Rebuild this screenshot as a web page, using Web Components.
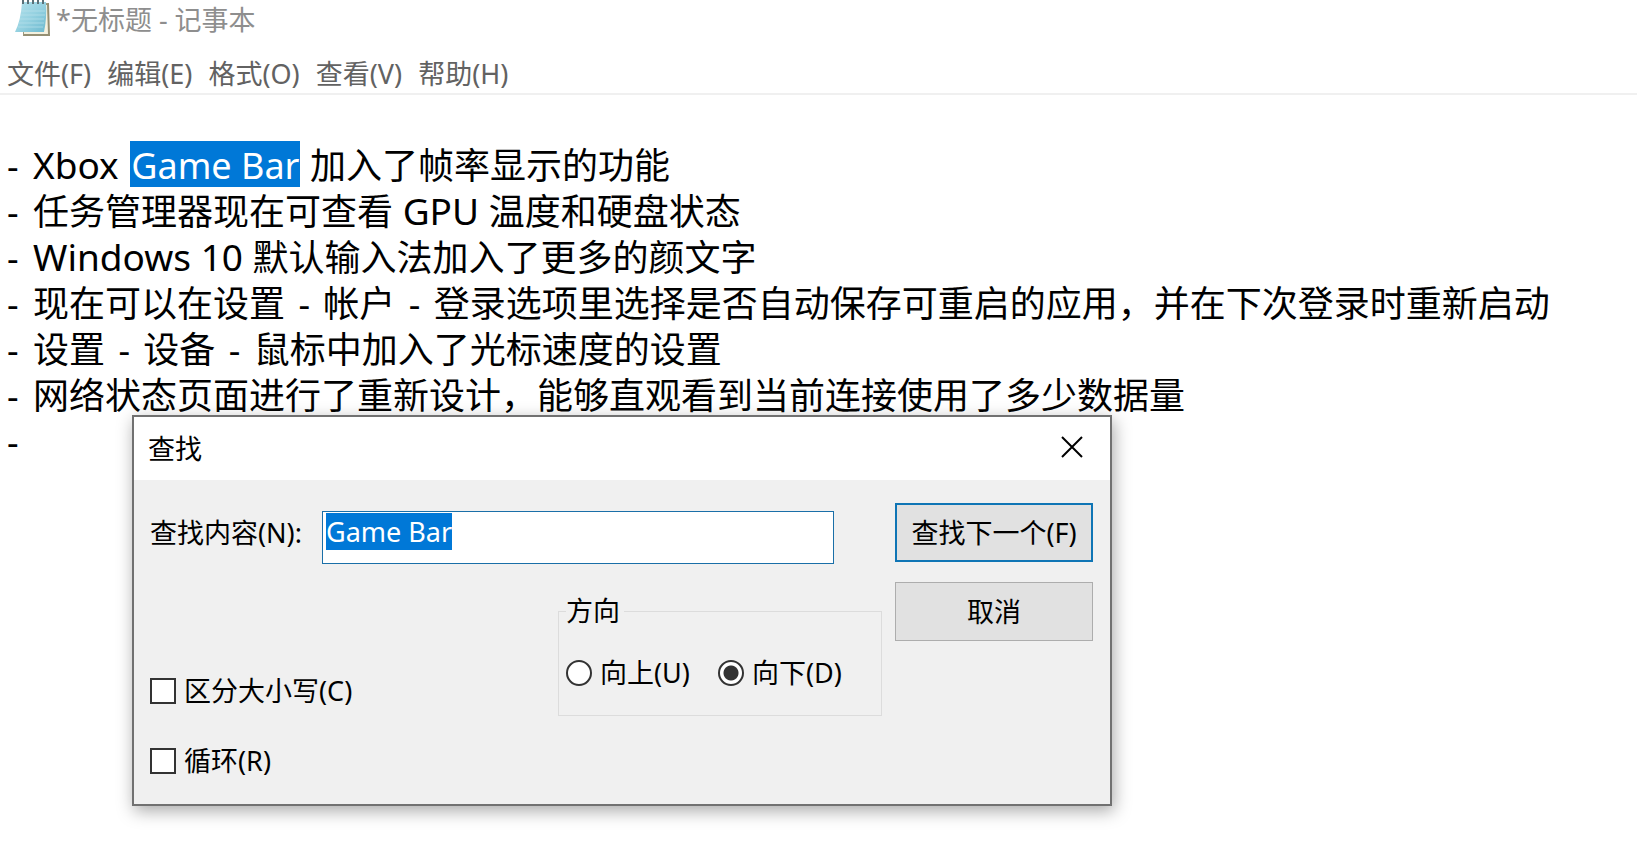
<!DOCTYPE html>
<html lang="zh-CN">
<head>
<meta charset="utf-8">
<title>*无标题 - 记事本</title>
<style>
body { margin: 0; background: #fff; color: #000; font: 27px/36px "Noto Sans", "Noto Sans CJK SC", sans-serif; }
</style>
</head>
<body>
<notepad-window>
  <title-bar slot="title">*无标题 - 记事本</title-bar>
  <menu-bar slot="menu">
    <menu-item>文件(F)</menu-item>
    <menu-item>编辑(E)</menu-item>
    <menu-item>格式(O)</menu-item>
    <menu-item>查看(V)</menu-item>
    <menu-item>帮助(H)</menu-item>
  </menu-bar>
  <note-line><latin-run>Xbox <selected-text>Game Bar</selected-text> </latin-run>加入了帧率显示的功能</note-line>
  <note-line>任务管理器现在可查看<latin-run> GPU </latin-run>温度和硬盘状态</note-line>
  <note-line><latin-run>Windows 10 </latin-run>默认输入法加入了更多的颜文字</note-line>
  <note-line>现在可以在设置<dash-mark></dash-mark>帐户<dash-mark></dash-mark>登录选项里选择是否自动保存可重启的应用，并在下次登录时重新启动</note-line>
  <note-line>设置<dash-mark></dash-mark>设备<dash-mark></dash-mark>鼠标中加入了光标速度的设置</note-line>
  <note-line>网络状态页面进行了重新设计，能够直观看到当前连接使用了多少数据量</note-line>
  <note-line></note-line>
  <find-dialog slot="dialog"></find-dialog>
</notepad-window>

<script>
function define(name, html, setup) {
  const template = document.createElement('template');
  template.innerHTML = html;
  customElements.define(name, class extends HTMLElement {
    constructor() {
      super();
      this.attachShadow({ mode: 'open' }).append(template.content.cloneNode(true));
    }
    connectedCallback() { if (setup) setup(this.shadowRoot, this); }
  });
}

define('dash-mark', `
  <style>:host { display: inline; } span { margin: 0 4px; }</style>
  <span> - </span>`);

define('latin-run', `
  <style>:host { display: inline; font-size: 37px; line-height: 42px; }</style>
  <slot></slot>`);

define('selected-text', `
  <style>:host { display: inline-block; margin-left: 2px; padding: 4px 1px 0; font-size: 36px; line-height: 42px; background: #0078d7; color: #fff; }</style>
  <slot></slot>`);

define('title-bar', `
  <style>
    :host { display: flex; align-items: center; height: 40px; padding-left: 14px; gap: 5px; color: #8e8e8e; }
    svg { flex: none; align-self: flex-start; }
  </style>
  <svg width="37" height="38" viewBox="0 0 37 38" aria-hidden="true">
    <defs>
      <linearGradient id="page" x1="0" y1="0" x2="1" y2="1">
        <stop offset="0" stop-color="#b4e2ec"/><stop offset=".5" stop-color="#96d2e1"/><stop offset="1" stop-color="#6cb9cf"/>
      </linearGradient>
    </defs>
    <path d="M10 4L35 3L36 36L9 36Z" fill="#958f73"/>
    <path d="M10 5L33 5L34 34L10 34Z" fill="#f4f1df"/>
    <path d="M8 2L32 2Q33 18 30 32L1 32Q7 20 8 2Z" fill="url(#page)"/>
    <path d="M7 11H31M7 15H31M6 19H30M5 23H30M4 27H29" stroke="#b9e2ec" stroke-width="1" opacity=".7"/>
    <path d="M9 0V4M14 0V4M19 0V4M24 0V4M29 0V4" stroke="#5a7077" stroke-width="2"/>
  </svg>
  <span><slot></slot></span>`);

define('menu-item', `
  <style>
    :host { display: block; }
    button { display: block; border: 0; padding: 0; background: none; font: inherit; color: inherit; white-space: nowrap; }
  </style>
  <button type="button"><slot></slot></button>`);

define('menu-bar', `
  <style>
    :host { display: block; border-bottom: 2px solid #f0f0f0; }
    nav { display: flex; gap: 16px; padding: 16px 7px 1px; color: #626262; }
  </style>
  <nav><slot></slot></nav>`);

define('note-line', `
  <style>
    :host { display: grid; grid-template-columns: 26px 1fr; align-items: end; }
  </style>
  <span>-</span><span><slot></slot></span>`);

define('notepad-window', `
  <style>
    :host { display: flex; flex-direction: column; min-height: 100vh; background: #fff; overflow: hidden; }
    main { position: relative; flex: 1; }
    .text { padding: 46px 7px 0; font-size: 36px; line-height: 46px; }
    .layer { position: absolute; top: 320px; left: 132px; }
  </style>
  <header><slot name="title"></slot><slot name="menu"></slot></header>
  <main>
    <div class="text"><slot></slot></div>
    <div class="layer"><slot name="dialog"></slot></div>
  </main>`);

define('dialog-button', `
  <style>
    :host { display: block; }
    button { display: block; width: 100%; height: 59px; padding: 0; border: 1px solid #adadad; background: #e1e1e1; font: inherit; color: #000; white-space: nowrap; }
    :host([default]) button { border: 2px solid #0f75b5; }
  </style>
  <button type="button"><slot></slot></button>`);

define('choice-field', `
  <style>
    :host { display: block; }
    label { display: flex; align-items: center; gap: 8px; white-space: nowrap; }
    input { appearance: none; flex: none; box-sizing: border-box; width: 26px; height: 26px; margin: 0; border: 2px solid #333; background: #fff; }
    input[type=radio] { border-radius: 50%; }
    input[type=radio]:checked { background: radial-gradient(circle, #333 7px, #fff 8px); }
    span { padding-top: 1px; }
  </style>
  <label><input><span><slot></slot></span></label>`,
  (root, host) => {
    const input = root.querySelector('input');
    input.type = host.getAttribute('type');
    input.checked = host.hasAttribute('checked');
    // Radios live in separate shadow roots, so a choice clears its siblings here.
    input.addEventListener('change', () => {
      if (input.type !== 'radio') return;
      for (const other of host.parentElement.querySelectorAll('choice-field[type=radio]')) {
        if (other !== host) other.shadowRoot.querySelector('input').checked = false;
      }
    });
  });

define('find-dialog', `
  <style>
    :host { display: block; }
    section { box-sizing: border-box; width: 980px; border: 2px solid #717171; background: #f0f0f0; box-shadow: 2px 5px 16px rgba(0, 0, 0, .34); }
    header { display: flex; align-items: center; justify-content: space-between; height: 63px; padding: 0 27px 0 14px; background: #fff; }
    h1 { margin: 0; font: inherit; }
    .close { display: block; padding: 0 0 4px; border: 0; background: none; }
    .close svg { display: block; }
    form { display: grid; grid-template-columns: 1fr 198px; padding: 23px 17px 25px 16px; }
    .find { display: grid; grid-template-columns: 172px 1fr; align-items: start; height: 64px; padding-right: 61px; }
    .find label { padding-top: 12px; }
    .find input { box-sizing: border-box; width: 100%; height: 53px; margin: 8px 0 0; padding: 2px 3px 14px; border: 1px solid #1a6fa8; border-radius: 0; outline: 0; background: #fff; font: inherit; line-height: 35px; color: #000; }
    .find input::selection { background: #0078d7; color: #fff; }
    .options { display: flex; justify-content: space-between; padding-right: 13px; }
    .checks { display: flex; flex-direction: column; gap: 33px; padding-top: 105px; }
    fieldset { box-sizing: border-box; width: 324px; height: 123px; margin: 26px 0 0; padding: 25px 7px 0; border: 1px solid #dcdcdc; display: flex; gap: 28px; align-items: flex-start; }
    legend { padding: 0 4px 0 0; }
    .actions { display: flex; flex-direction: column; gap: 20px; }
  </style>
  <section role="dialog" aria-labelledby="heading">
    <header>
      <h1 id="heading">查找</h1>
      <button class="close" type="button" aria-label="关闭">
        <svg width="22" height="22" viewBox="0 0 22 22"><path d="M1 1L21 21M21 1L1 21" stroke="#000" stroke-width="2"/></svg>
      </button>
    </header>
    <form>
      <div>
        <div class="find"><label for="term">查找内容(N):</label><input id="term" type="text" value="Game Bar" autocomplete="off" spellcheck="false"></div>
        <div class="options">
          <div class="checks">
            <choice-field type="checkbox">区分大小写(C)</choice-field>
            <choice-field type="checkbox">循环(R)</choice-field>
          </div>
          <fieldset>
            <legend>方向</legend>
            <choice-field type="radio">向上(U)</choice-field>
            <choice-field type="radio" checked>向下(D)</choice-field>
          </fieldset>
        </div>
      </div>
      <div class="actions">
        <dialog-button default>查找下一个(F)</dialog-button>
        <dialog-button>取消</dialog-button>
      </div>
    </form>
  </section>`,
  root => {
    const input = root.querySelector('#term');
    input.focus({ preventScroll: true });
    input.select();
  });
</script>
</body>
</html>
